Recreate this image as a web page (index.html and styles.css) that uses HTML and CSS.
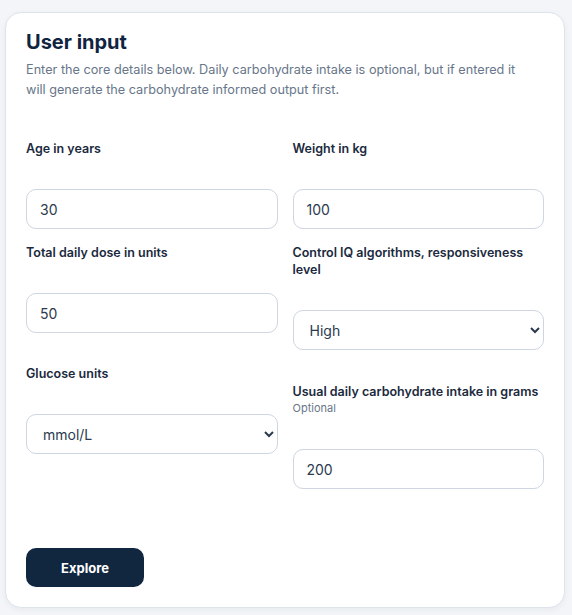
FILE: index.html
```html
<!DOCTYPE html>
<html lang="en">
<head>
<meta charset="utf-8">
<title>User input</title>
<link rel="stylesheet" href="styles.css">
</head>
<body>
  <section class="card">
    <h1 class="title">User input</h1>
    <p class="desc">Enter the core details below. Daily carbohydrate intake is optional, but if entered it will generate the carbohydrate informed output first.</p>
    <form class="grid">
      <div class="field">
        <label class="label">Age in years</label>
        <input class="control" type="text" value="30">
      </div>
      <div class="field">
        <label class="label">Weight in kg</label>
        <input class="control" type="text" value="100">
      </div>
      <div class="field">
        <label class="label">Total daily dose in units</label>
        <input class="control" type="text" value="50">
      </div>
      <div class="field">
        <label class="label">Control IQ algorithms, responsiveness level</label>
        <select class="control select"><option>High</option></select>
      </div>
      <div class="field">
        <label class="label">Glucose units</label>
        <select class="control select"><option>mmol/L</option></select>
      </div>
      <div class="field field-offset">
        <div class="label-group">
          <label class="label">Usual daily carbohydrate intake in grams</label>
          <span class="hint">Optional</span>
        </div>
        <input class="control" type="text" value="200">
      </div>
    </form>
    <button class="btn" type="button">Explore</button>
  </section>
</body>
</html>
```
FILE: styles.css
```css
* { box-sizing: border-box; }
html, body { margin: 0; }
body {
  background: #f3f5f8;
  font-family: Inter, "Noto Sans", "Liberation Sans", sans-serif;
  padding: 12px 7px 8px 5px;
}
.card {
  width: 560px;
  background: #fff;
  border: 1px solid #dde4ec;
  border-radius: 16px;
  box-shadow: 0 2px 6px rgba(15, 37, 64, 0.05);
  padding: 18px 20px 20px;
}
.title {
  margin: 0;
  font-size: 20px;
  line-height: 22px;
  font-weight: 700;
  color: #10243f;
}
.desc {
  margin: 7px 0 0;
  max-width: 500px;
  font-size: 12.7px;
  line-height: 20px;
  color: #68768a;
}
.grid {
  margin-top: 40px;
  display: grid;
  grid-template-columns: 1fr 1fr;
  column-gap: 15px;
  row-gap: 15px;
  align-items: start;
}
.field {
  display: flex;
  flex-direction: column;
}
.field-offset { margin-top: 18px; }
.label-group { display: flex; flex-direction: column; }
.label {
  font-size: 12.5px;
  line-height: 17px;
  font-weight: 600;
  color: #1b2a3e;
}
.hint {
  font-size: 11px;
  line-height: 17px;
  color: #6b7789;
}
.control {
  margin-top: 32px;
  height: 40px;
  width: 100%;
  border: 1px solid #cdd6e1;
  border-radius: 10px;
  background: #fff;
  padding: 0 13px;
  font-family: Inter, "Noto Sans", "Liberation Sans", sans-serif;
  font-size: 14px;
  color: #2b3a4e;
  outline: none;
}
.select { padding: 0 8px 0 12px; }
.btn {
  margin-top: 59px;
  width: 118px;
  height: 39px;
  border: none;
  border-radius: 10px;
  background: #11263f;
  color: #fff;
  font-family: Inter, "Noto Sans", "Liberation Sans", sans-serif;
  font-size: 13px;
  font-weight: 700;
}
```
